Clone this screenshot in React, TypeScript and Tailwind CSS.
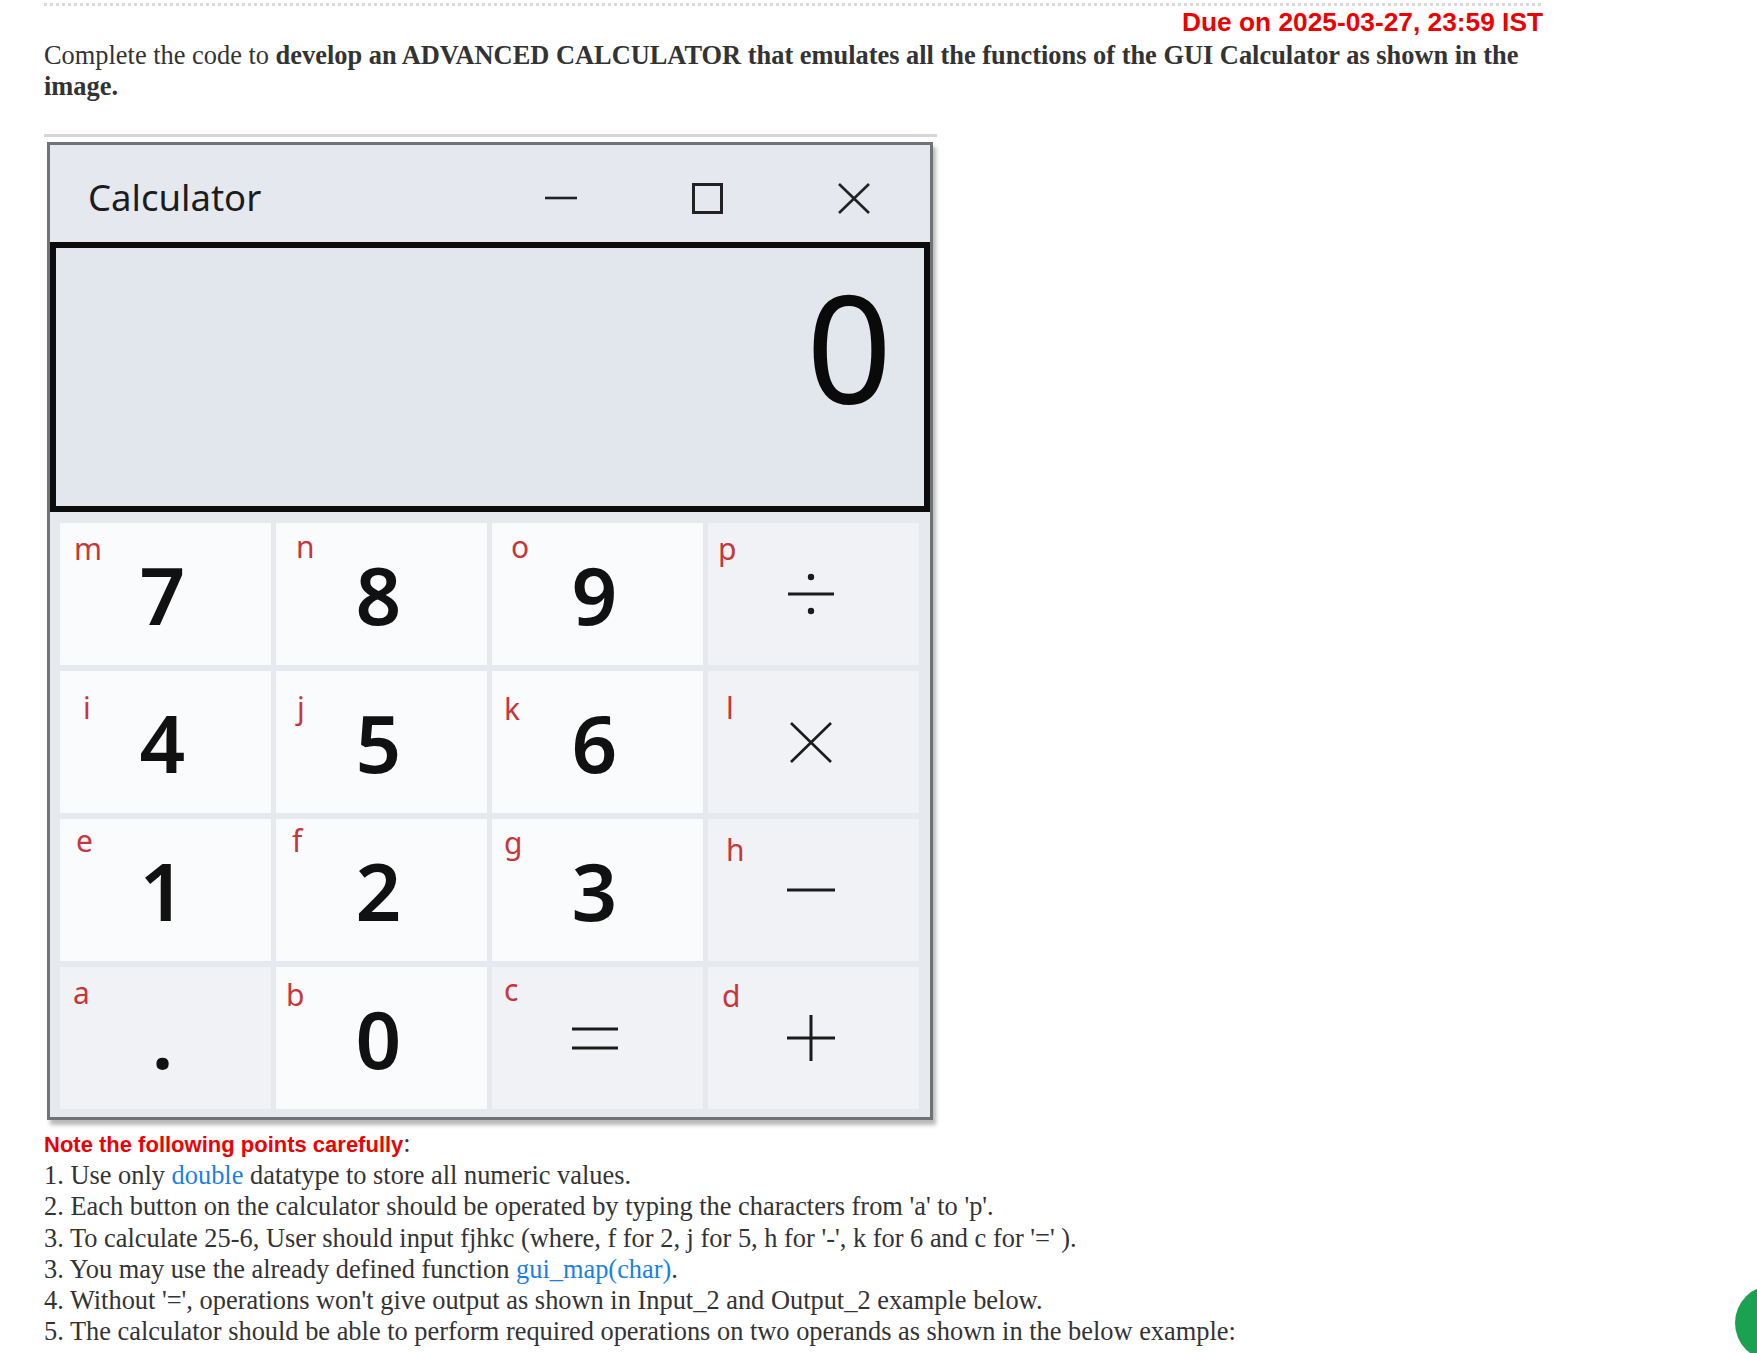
import type { ReactNode } from "react";

const ink = "#1b1b1b";

function DivideIcon() {
  return (
    <svg width="48" height="42" viewBox="0 0 48 42">
      <line x1="1" y1="21" x2="47" y2="21" stroke={ink} strokeWidth="3" />
      <circle cx="24" cy="4" r="3.2" fill={ink} />
      <circle cx="24" cy="38" r="3.2" fill={ink} />
    </svg>
  );
}

function TimesIcon() {
  return (
    <svg width="42" height="41" viewBox="0 0 42 41">
      <line x1="1" y1="1" x2="41" y2="40" stroke={ink} strokeWidth="2.6" />
      <line x1="41" y1="1" x2="1" y2="40" stroke={ink} strokeWidth="2.6" />
    </svg>
  );
}

function MinusIcon() {
  return (
    <svg width="48" height="6" viewBox="0 0 48 6">
      <line x1="0" y1="3" x2="48" y2="3" stroke={ink} strokeWidth="3" />
    </svg>
  );
}

function PlusIcon() {
  return (
    <svg width="48" height="46" viewBox="0 0 48 46">
      <line x1="0" y1="23" x2="48" y2="23" stroke={ink} strokeWidth="3" />
      <line x1="24" y1="0" x2="24" y2="46" stroke={ink} strokeWidth="3" />
    </svg>
  );
}

function EqualsIcon() {
  return (
    <svg width="46" height="23" viewBox="0 0 46 23">
      <line x1="0" y1="2" x2="46" y2="2" stroke={ink} strokeWidth="3" />
      <line x1="0" y1="21" x2="46" y2="21" stroke={ink} strokeWidth="3" />
    </svg>
  );
}

function Digit({ children }: { children: ReactNode }) {
  return (
    <span className="font-['Noto_Sans',sans-serif] text-[80px] leading-none font-semibold text-[#111111]">
      {children}
    </span>
  );
}

type KeyDef = { label: string; pos: string; gray: boolean; body: ReactNode };

const keys: KeyDef[] = [
  { label: "m", pos: "left-[14px] top-[11px]", gray: false, body: <Digit>7</Digit> },
  { label: "n", pos: "left-[20px] top-[9px]", gray: false, body: <Digit>8</Digit> },
  { label: "o", pos: "left-[19px] top-[9px]", gray: false, body: <Digit>9</Digit> },
  { label: "p", pos: "left-[10px] top-[11px]", gray: true, body: <DivideIcon /> },
  { label: "i", pos: "left-[23px] top-[22px]", gray: false, body: <Digit>4</Digit> },
  { label: "j", pos: "left-[21px] top-[22px]", gray: false, body: <Digit>5</Digit> },
  { label: "k", pos: "left-[12px] top-[23px]", gray: false, body: <Digit>6</Digit> },
  { label: "l", pos: "left-[18px] top-[22px]", gray: true, body: <TimesIcon /> },
  { label: "e", pos: "left-[16px] top-[7px]", gray: false, body: <Digit>1</Digit> },
  { label: "f", pos: "left-[16px] top-[7px]", gray: false, body: <Digit>2</Digit> },
  { label: "g", pos: "left-[12px] top-[9px]", gray: false, body: <Digit>3</Digit> },
  { label: "h", pos: "left-[18px] top-[16px]", gray: true, body: <MinusIcon /> },
  { label: "a", pos: "left-[13px] top-[11px]", gray: true, body: <Digit>.</Digit> },
  { label: "b", pos: "left-[10px] top-[13px]", gray: false, body: <Digit>0</Digit> },
  { label: "c", pos: "left-[12px] top-[8px]", gray: true, body: <EqualsIcon /> },
  { label: "d", pos: "left-[14px] top-[14px]", gray: true, body: <PlusIcon /> },
];

function Key({ k }: { k: KeyDef }) {
  return (
    <div
      className={
        "relative flex items-center justify-center pr-[6px] " +
        (k.gray ? "bg-[#f0f2f5]" : "bg-[#fafbfc]")
      }
    >
      <span
        className={
          "absolute font-['Noto_Sans',sans-serif] text-[30px] leading-none text-[#c8363c] " +
          k.pos
        }
      >
        {k.label}
      </span>
      {k.body}
    </div>
  );
}

function CalculatorWindow() {
  return (
    <div className="mt-[32px] w-[893px] bg-white pb-[8px]">
      <div className="h-[3px] bg-[#d6d6d6]" />
      <div className="ml-[3px] mt-[5px] w-[886px] border-[3px] border-[#6f7277] bg-[#e5e8ef] shadow-[3px_5px_4px_rgba(0,0,0,0.28)]">
        {/* title bar */}
        <div className="flex h-[97px] items-center pl-[38px] pr-[60px] pt-[9px]">
          <span className="font-['Noto_Sans',sans-serif] text-[36.5px] text-[#1c1c1c]">Calculator</span>
          <div className="ml-auto flex items-center gap-[115px]">
            <svg width="32" height="32" viewBox="0 0 32 32">
              <line x1="0" y1="16" x2="32" y2="16" stroke="#222" strokeWidth="2.6" />
            </svg>
            <svg width="31" height="31" viewBox="0 0 31 31">
              <rect x="1.5" y="1.5" width="28" height="28" fill="none" stroke="#222" strokeWidth="3" />
            </svg>
            <svg width="32" height="31" viewBox="0 0 32 31">
              <line x1="1" y1="1" x2="31" y2="30" stroke="#222" strokeWidth="2.6" />
              <line x1="31" y1="1" x2="1" y2="30" stroke="#222" strokeWidth="2.6" />
            </svg>
          </div>
        </div>
        {/* display */}
        <div className="flex h-[270px] items-start justify-end border-[6px] border-[#0c0c0c] bg-[#e2e6ed] pr-[32px] pt-[23px]">
          <span className="font-['Noto_Sans',sans-serif] text-[150px] leading-none text-[#0a0a0a]">0</span>
        </div>
        {/* keypad */}
        <div className="grid grid-cols-[repeat(4,211px)] grid-rows-[repeat(4,142px)] gap-x-[5px] gap-y-[6px] bg-[#e6e9ee] pb-[8px] pl-[10px] pr-[11px] pt-[11px]">
          {keys.map((k) => (
            <Key key={k.label} k={k} />
          ))}
        </div>
      </div>
    </div>
  );
}

export default function App() {
  return (
    <div className="min-h-screen bg-white">
      <div className="w-[1543px] pl-[44px] pt-[3px] font-['Liberation_Serif',serif] text-[26.4px] leading-[31.2px] text-[#333333]">
        <div className="h-[3px] bg-[repeating-linear-gradient(90deg,#d9d9d9_0_3px,transparent_3px_6px)]" />
        <div className="mt-[1px] text-right font-['Liberation_Sans',sans-serif] text-[26.3px] font-bold leading-[30px] text-[#ee0000]">
          Due on 2025-03-27, 23:59 IST
        </div>
        <p className="mt-[3px] leading-[31px]">
          Complete the code to{" "}
          <b>
            develop an ADVANCED CALCULATOR that emulates all the functions of the GUI Calculator as
            shown in the
          </b>{" "}
          <b>image.</b>
        </p>

        <CalculatorWindow />

        <div>
          <span className="font-['Liberation_Sans',sans-serif] text-[22px] font-bold text-[#ee0000]">
            Note the following points carefully
          </span>
          :
        </div>
        <div>
          1. Use only <span className="text-[#1a7fe6]">double</span> datatype to store all numeric values.
        </div>
        <div>2. Each button on the calculator should be operated by typing the characters from 'a' to 'p'.</div>
        <div>
          3. To calculate 25-6, User should input fjhkc (where, f for 2, j for 5, h for '-', k for 6 and c
          for '=' ).
        </div>
        <div>
          3. You may use the already defined function{" "}
          <span className="text-[#1a7fe6]">gui_map(char)</span>.
        </div>
        <div>4. Without '=', operations won't give output as shown in Input_2 and Output_2 example below.</div>
        <div>
          5. The calculator should be able to perform required operations on two operands as shown in the
          below example:
        </div>
      </div>

      <div className="fixed left-[1735px] top-[1285px] h-[76px] w-[76px] rounded-full bg-[#1aa251]" />
    </div>
  );
}
